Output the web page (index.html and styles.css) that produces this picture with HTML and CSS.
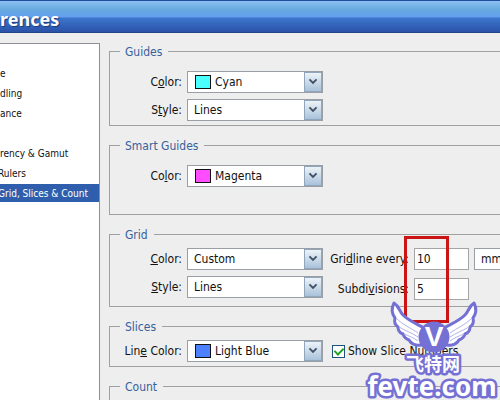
FILE: index.html
```
<!DOCTYPE html>
<html lang="en">
<head>
    <meta charset="UTF-8">
    <meta name="viewport" content="width=device-width, initial-scale=1.0">
    <title>Preferences</title>
    <link rel="stylesheet" href="styles.css">
</head>
<body>
    <header class="titlebar"><h1>rences</h1></header>

    <div class="dialog">
        <ul class="sidebar">
            <li></li>
            <li>e</li>
            <li>dling</li>
            <li>ance</li>
            <li></li>
            <li>rency &amp; Gamut</li>
            <li class="cut">Rulers</li>
            <li class="cut active">Grid, Slices &amp; Count</li>
        </ul>

        <form class="panel">
            <fieldset class="guides">
                <legend>Guides</legend>
                <div class="rows">
                    <div class="row">
                        <label for="guideColor">C<u>o</u>lor:</label>
                        <span class="combo">
                            <select id="guideColor" class="with-swatch"><option>Cyan</option></select>
                            <i class="swatch cyan"></i>
                            <svg class="arrow" viewBox="0 0 18 20"><path d="M5 7l4 4 4-4"/></svg>
                        </span>
                    </div>
                    <div class="row">
                        <label for="guideStyle">S<u>t</u>yle:</label>
                        <span class="combo">
                            <select id="guideStyle"><option>Lines</option></select>
                            <svg class="arrow" viewBox="0 0 18 20"><path d="M5 7l4 4 4-4"/></svg>
                        </span>
                    </div>
                </div>
            </fieldset>

            <fieldset class="smart">
                <legend>Smart Guides</legend>
                <div class="row">
                    <label for="smartColor">Co<u>l</u>or:</label>
                    <span class="combo">
                        <select id="smartColor" class="with-swatch"><option>Magenta</option></select>
                        <i class="swatch magenta"></i>
                        <svg class="arrow" viewBox="0 0 18 20"><path d="M5 7l4 4 4-4"/></svg>
                    </span>
                </div>
            </fieldset>

            <fieldset class="grid">
                <legend>Grid</legend>
                <div class="columns">
                    <div class="rows">
                        <div class="row">
                            <label for="gridColor"><u>C</u>olor:</label>
                            <span class="combo">
                                <select id="gridColor"><option>Custom</option></select>
                                <svg class="arrow" viewBox="0 0 18 20"><path d="M5 7l4 4 4-4"/></svg>
                            </span>
                        </div>
                        <div class="row">
                            <label for="gridStyle"><u>S</u>tyle:</label>
                            <span class="combo">
                                <select id="gridStyle"><option>Lines</option></select>
                                <svg class="arrow" viewBox="0 0 18 20"><path d="M5 7l4 4 4-4"/></svg>
                            </span>
                        </div>
                    </div>
                    <div class="rows numbers">
                        <div class="row">
                            <label for="gridEvery">Gri<u>d</u>line every:</label>
                            <input type="text" id="gridEvery" value="10">
                            <span class="combo unit">
                                <select id="gridUnit" aria-label="Unit"><option>mm</option></select>
                            </span>
                        </div>
                        <div class="row">
                            <label for="gridSub">Subdi<u>v</u>isions:</label>
                            <input type="text" id="gridSub" value="5">
                        </div>
                    </div>
                </div>
            </fieldset>

            <fieldset class="slices">
                <legend>Slices</legend>
                <div class="row">
                    <label for="sliceColor">Lin<u>e</u> Color:</label>
                    <span class="combo">
                        <select id="sliceColor" class="with-swatch"><option>Light Blue</option></select>
                        <i class="swatch blue"></i>
                        <svg class="arrow" viewBox="0 0 18 20"><path d="M5 7l4 4 4-4"/></svg>
                    </span>
                    <span class="check">
                        <input type="checkbox" id="sliceNumbers" checked>
                        <label for="sliceNumbers">Show Slice Numbers</label>
                    </span>
                </div>
            </fieldset>

            <fieldset class="count">
                <legend>Count</legend>
            </fieldset>
        </form>
    </div>

    <div class="marker"></div>

    <svg class="watermark" viewBox="0 0 139 102">
        <g class="wings">
            <path d="M33 5C30 11 31 16 34 20C33 24 34 27 37 29C37 32 39 35 42 36C43 39 45 41 48 42C50 46 55 48 60 47L63 30C56 26 48 23 42 17C38 13 38 8 33 5Z"/>
            <path d="M113 5C116 11 115 16 112 20C113 24 112 27 109 29C109 32 107 35 104 36C103 39 101 41 98 42C96 46 91 48 86 47L83 30C90 26 98 23 104 17C108 13 108 8 113 5Z"/>
            <circle cx="73" cy="39" r="14"/>
        </g>
        <path class="feather" d="M35 20C42 27 50 30 57 35M38 29C45 33 51 35 57 39M43 36C48 38 53 40 57 43M111 20C104 27 96 30 89 35M108 29C101 33 95 35 89 39M103 36C98 38 93 40 89 43"/>
        <text class="brand" x="72" y="73" text-anchor="middle">飞特网</text>
        <text class="initial" x="73" y="48" text-anchor="middle">V</text>
        <text class="domain" x="71" y="98" text-anchor="middle">fevte.com</text>
    </svg>
</body>
</html>
```
FILE: styles.css
```
* { box-sizing: border-box; }
html, body { height: 100%; }
body { position: relative; display: flex; flex-direction: column; margin: 0; overflow: hidden; background: #eeeeee; color: #111; font-family: "DejaVu Sans Condensed", "DejaVu Sans", sans-serif; font-size: 12px; line-height: 16px; }

.titlebar { flex: none; height: 33px; border-top: 1px solid #1f4f9c; border-bottom: 1px solid #24448a; background: linear-gradient(#8cc0f4, #66aadd 28%, #649ff0 50%, #3b76cc 56%, #2a52a8); }
h1 { margin: 0; color: #fff; font-family: "Noto Sans", sans-serif; font-size: 18px; line-height: 36px; text-shadow: 1px 1px 1px #1b3a78; }

.dialog { flex: 1; display: flex; gap: 9px; padding-top: 10px; min-height: 0; }
.sidebar { flex: none; width: 100px; margin: 0; padding: 0; overflow: hidden; list-style: none; background: #fff; border-top: 1px solid #8c8f98; border-right: 1px solid #8c8f98; font-size: 10px; white-space: nowrap; }
.sidebar li { height: 18px; margin-bottom: 2px; line-height: 20px; }
.sidebar .cut { text-indent: -2px; }
.sidebar .active { background: #2f5fac; color: #fff; }

.panel { flex: 1; min-width: 0; display: flex; flex-direction: column; gap: 11px; overflow: hidden; }
fieldset { flex: none; min-width: 0; margin: 0; border: 1px solid #a0a0a0; border-right: none; padding: 5px 0 4px 10px; }
legend { padding: 0 6px 0 5px; height: 17px; line-height: 18px; color: #37619c; white-space: nowrap; }
.guides { padding-top: 11px; }
.smart { padding-top: 11px; padding-bottom: 27px; }
.grid { padding-bottom: 6px; }
.count { flex: 1; border-bottom: none; padding: 0 0 0 10px; }

.columns { display: flex; }
.rows { display: flex; flex-direction: column; gap: 6px; }
.row { display: flex; align-items: center; gap: 5px; height: 22px; }
.row > label { flex: none; width: 62px; text-align: right; white-space: nowrap; }
.numbers { gap: 8px; }
.numbers .row > label { width: 86px; }

.combo { position: relative; flex: none; width: 136px; height: 22px; }
.combo select { display: block; appearance: none; width: 100%; height: 22px; margin: 0; padding: 0 20px 0 6px; border: 1px solid #9a9fa6; border-radius: 0; background: #fff; color: #111; font: inherit; }
.combo .with-swatch { padding-left: 27px; }
.combo.unit { width: 60px; }
.arrow { position: absolute; top: 1px; right: 1px; width: 18px; height: 20px; border: 1px solid #8fa6bd; background: linear-gradient(#edf3f8, #a9c2da); pointer-events: none; }
.arrow path { fill: none; stroke: #3f4f66; stroke-width: 2; }
.swatch { position: absolute; top: 4px; left: 8px; width: 16px; height: 14px; border: 1px solid #111; pointer-events: none; }
.cyan { background: #4cffff; }
.magenta { background: #ff4cff; }
.blue { background: #4c80ff; }

input[type="text"] { flex: none; width: 55px; height: 22px; margin: 0; padding: 0 2px; border: 1px solid #a5a5a5; background: #fff; color: #111; font: inherit; }
.check { display: flex; align-items: center; gap: 3px; margin-left: 4px; white-space: nowrap; }
input[type="checkbox"] { appearance: none; flex: none; width: 13px; height: 13px; margin: 0; border: 1px solid #1c5180; background: #fff; }
input[type="checkbox"]:checked::before { content: ""; display: block; width: 4px; height: 7px; margin: 0 0 0 3px; border: solid #21a121; border-width: 0 2px 2px 0; transform: rotate(45deg); }

.marker { position: absolute; top: 236px; left: 404px; width: 45px; height: 87px; border: 3px solid #cc1414; }

.watermark { position: absolute; top: 298px; left: 361px; width: 139px; height: 102px; }
.wings path, .wings circle { fill: #fff; stroke: #7470d4; stroke-width: 3; stroke-linejoin: round; }
.wings circle { fill: #7470d4; }
.feather { fill: none; stroke: #b3b1ea; stroke-width: 1; }
.initial { fill: #fff; font-family: "Liberation Sans", sans-serif; font-size: 28px; font-weight: bold; }
.brand, .domain { fill: #fff; stroke: #7470d4; stroke-width: 5; stroke-linejoin: round; paint-order: stroke; font-weight: bold; }
.brand { font-family: "Noto Sans CJK SC", sans-serif; font-size: 18px; }
.domain { font-family: "Noto Sans", sans-serif; font-size: 26px; }
```
